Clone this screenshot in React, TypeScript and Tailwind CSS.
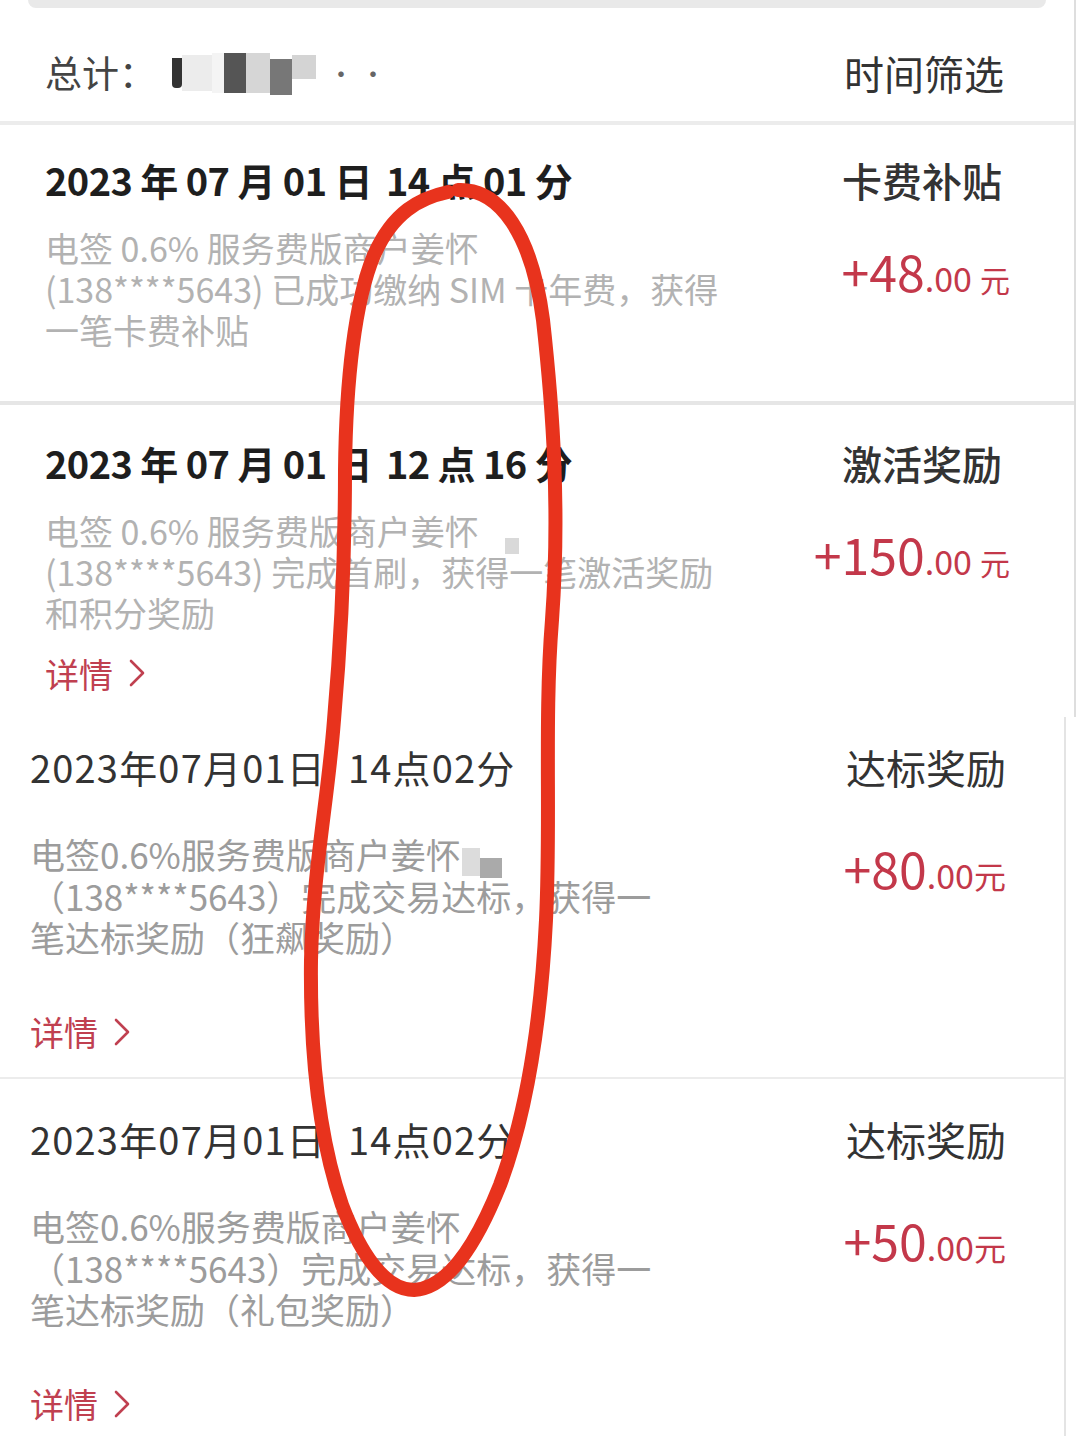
type Row = {
  date: [string, string];
  label: string;
  lines: string[];
  big: string;
  detail: boolean;
};

const rows: Row[] = [
  {
    date: ["2023 年 07 月 01 日", "14 点 01 分"],
    label: "卡费补贴",
    lines: ["电签 0.6% 服务费版商户姜怀", "(138****5643) 已成功缴纳 SIM 卡年费，获得", "一笔卡费补贴"],
    big: "+48",
    detail: false,
  },
  {
    date: ["2023 年 07 月 01 日", "12 点 16 分"],
    label: "激活奖励",
    lines: ["电签 0.6% 服务费版商户姜怀", "(138****5643) 完成首刷，获得一笔激活奖励", "和积分奖励"],
    big: "+150",
    detail: true,
  },
];

const rows2: Row[] = [
  {
    date: ["2023年07月01日", "14点02分"],
    label: "达标奖励",
    lines: ["电签0.6%服务费版商户姜怀", "（138****5643）完成交易达标，获得一", "笔达标奖励（狂飙奖励）"],
    big: "+80",
    detail: true,
  },
  {
    date: ["2023年07月01日", "14点02分"],
    label: "达标奖励",
    lines: ["电签0.6%服务费版商户姜怀", "（138****5643）完成交易达标，获得一", "笔达标奖励（礼包奖励）"],
    big: "+50",
    detail: true,
  },
];

function Detail() {
  return (
    <div className="flex items-center h-[40px] text-[34px] text-[#c04050]">
      <span>详情</span>
      <svg className="ml-[16px]" width="16" height="28" viewBox="0 0 16 28">
        <polyline points="2,2 14,14 2,26" fill="none" stroke="#c04050" strokeWidth="2.6" strokeLinecap="round" strokeLinejoin="round" />
      </svg>
    </div>
  );
}

function Amount({ big, tight }: { big: string; tight?: boolean }) {
  return (
    <div className="flex items-baseline text-[#c3384a] leading-none">
      <span className="text-[50px]">{big}</span>
      <span className="text-[34px]">.00</span>
      <span className={tight ? "text-[32px]" : "text-[30px] ml-2"}>元</span>
    </div>
  );
}

export default function App() {
  return (
    <div className="relative w-[1080px] h-[1439px] overflow-hidden bg-white font-['Noto_Sans_CJK_SC',sans-serif]">
      {/* top section */}
      <div className="w-[1076px] border-r-2 border-[#dedede]">
        <div className="mx-[28px] h-[8px] rounded-b-[14px] bg-[#e9e9e9]" />
        <div className="flex items-center justify-between h-[117px] pt-[16px] pl-[45px] pr-[70px] border-b-4 border-[#ececec]">
          <div className="flex items-center text-[37px] text-[#444]">
            <span>总计：</span>
            <div className="flex items-center ml-4 h-[40px]">
              <div className="w-[10px] h-[30px] bg-[#333] rounded-b" />
              <div className="w-[30px] h-[36px] bg-[#ececec]" />
              <div className="w-[12px] h-[40px] bg-[#f4f4f4]" />
              <div className="w-[22px] h-[40px] bg-[#555]" />
              <div className="w-[24px] h-[40px] bg-[#d6d6d6]" />
              <div className="w-[22px] h-[36px] bg-[#777] mt-2" />
              <div className="w-[24px] h-[24px] bg-[#d4d4d4] -mt-3" />
              <span className="ml-3 text-[26px] text-[#666] tracking-[6px]">··</span>
            </div>
          </div>
          <span className="text-[40px] text-[#333]">时间筛选</span>
        </div>

        {rows.map((r, i) => (
          <div
            key={i}
            className={
              i === 0
                ? "flex justify-between h-[280px] pt-[30px] pl-[45px] pr-[64px] border-b-4 border-[#e6e6e6]"
                : "flex justify-between h-[312px] pt-[33px] pl-[45px] pr-[64px]"
            }
          >
            <div className="flex flex-col">
              <div className="flex gap-[14px] text-[38px] leading-[50px] font-semibold text-[#1e1e1e] tracking-[-0.6px] whitespace-nowrap">
                <span>{r.date[0]}</span>
                <span>{r.date[1]}</span>
              </div>
              <div className="mt-[22px] text-[34px] leading-[41px] text-[#b2b2b2]">
                {r.lines.map((l, j) => (
                  <div key={j} className="whitespace-nowrap">{l}</div>
                ))}
              </div>
              {r.detail && (
                <div className="mt-[20px]">
                  <Detail />
                </div>
              )}
            </div>
            <div className="flex flex-col items-end">
              <div className="text-[40px] leading-[50px] font-medium text-[#333] mr-[8px]">{r.label}</div>
              <div className="mt-[40px]">
                <Amount big={r.big} />
              </div>
            </div>
          </div>
        ))}
      </div>

      {/* bottom section */}
      <div className="w-[1066px] border-r-2 border-[#e4e4e4]">
        {rows2.map((r, i) => (
          <div
            key={i}
            className={
              i === 0
                ? "flex justify-between h-[362px] pt-[25px] pl-[30px] pr-[58px] border-b-2 border-[#ececec]"
                : "flex justify-between h-[357px] pt-[35px] pl-[30px] pr-[58px]"
            }
          >
            <div className="flex flex-col">
              <div className="flex gap-[22px] text-[38px] leading-[50px] text-[#333] tracking-[1.2px] whitespace-nowrap">
                <span>{r.date[0]}</span>
                <span>{r.date[1]}</span>
              </div>
              <div className="mt-[41px] text-[35px] leading-[41.5px] text-[#9c9c9c]">
                {r.lines.map((l, j) => (
                  <div key={j} className="whitespace-nowrap">{l}</div>
                ))}
              </div>
              <div className="mt-[54px]">
                <Detail />
              </div>
            </div>
            <div className="flex flex-col items-end">
              <div className="text-[40px] leading-[50px] text-[#333]">{r.label}</div>
              <div className="mt-[50px]">
                <Amount big={r.big} tight />
              </div>
            </div>
          </div>
        ))}
      </div>

      {/* blur blocks over redacted names */}
      <div className="absolute left-[505px] top-[538px] w-[14px] h-[16px] bg-[#d9d9d9]" />
      <div className="absolute left-[462px] top-[848px] w-[18px] h-[28px] bg-[#dcdcdc]" />
      <div className="absolute left-[480px] top-[858px] w-[22px] h-[20px] bg-[#aaa]" />

      {/* hand-drawn red loop */}
      <svg className="absolute left-0 top-0 pointer-events-none" width="1080" height="1439" viewBox="0 0 1080 1439">
        <path
          d="M 458 190 C 500 188 532 235 543 320 C 553 410 560 510 552 620 C 544 720 551 820 546 920 C 541 1020 528 1110 500 1185 C 476 1245 448 1288 414 1290 C 384 1290 360 1252 342 1205 C 318 1135 310 1045 311 960 C 313 870 328 800 334 720 C 341 640 345 560 345 470 C 346 380 355 300 374 255 C 393 212 420 198 448 192"
          fill="none"
          stroke="#e8331d"
          strokeWidth="14"
          strokeLinecap="round"
          strokeLinejoin="round"
        />
      </svg>
    </div>
  );
}
